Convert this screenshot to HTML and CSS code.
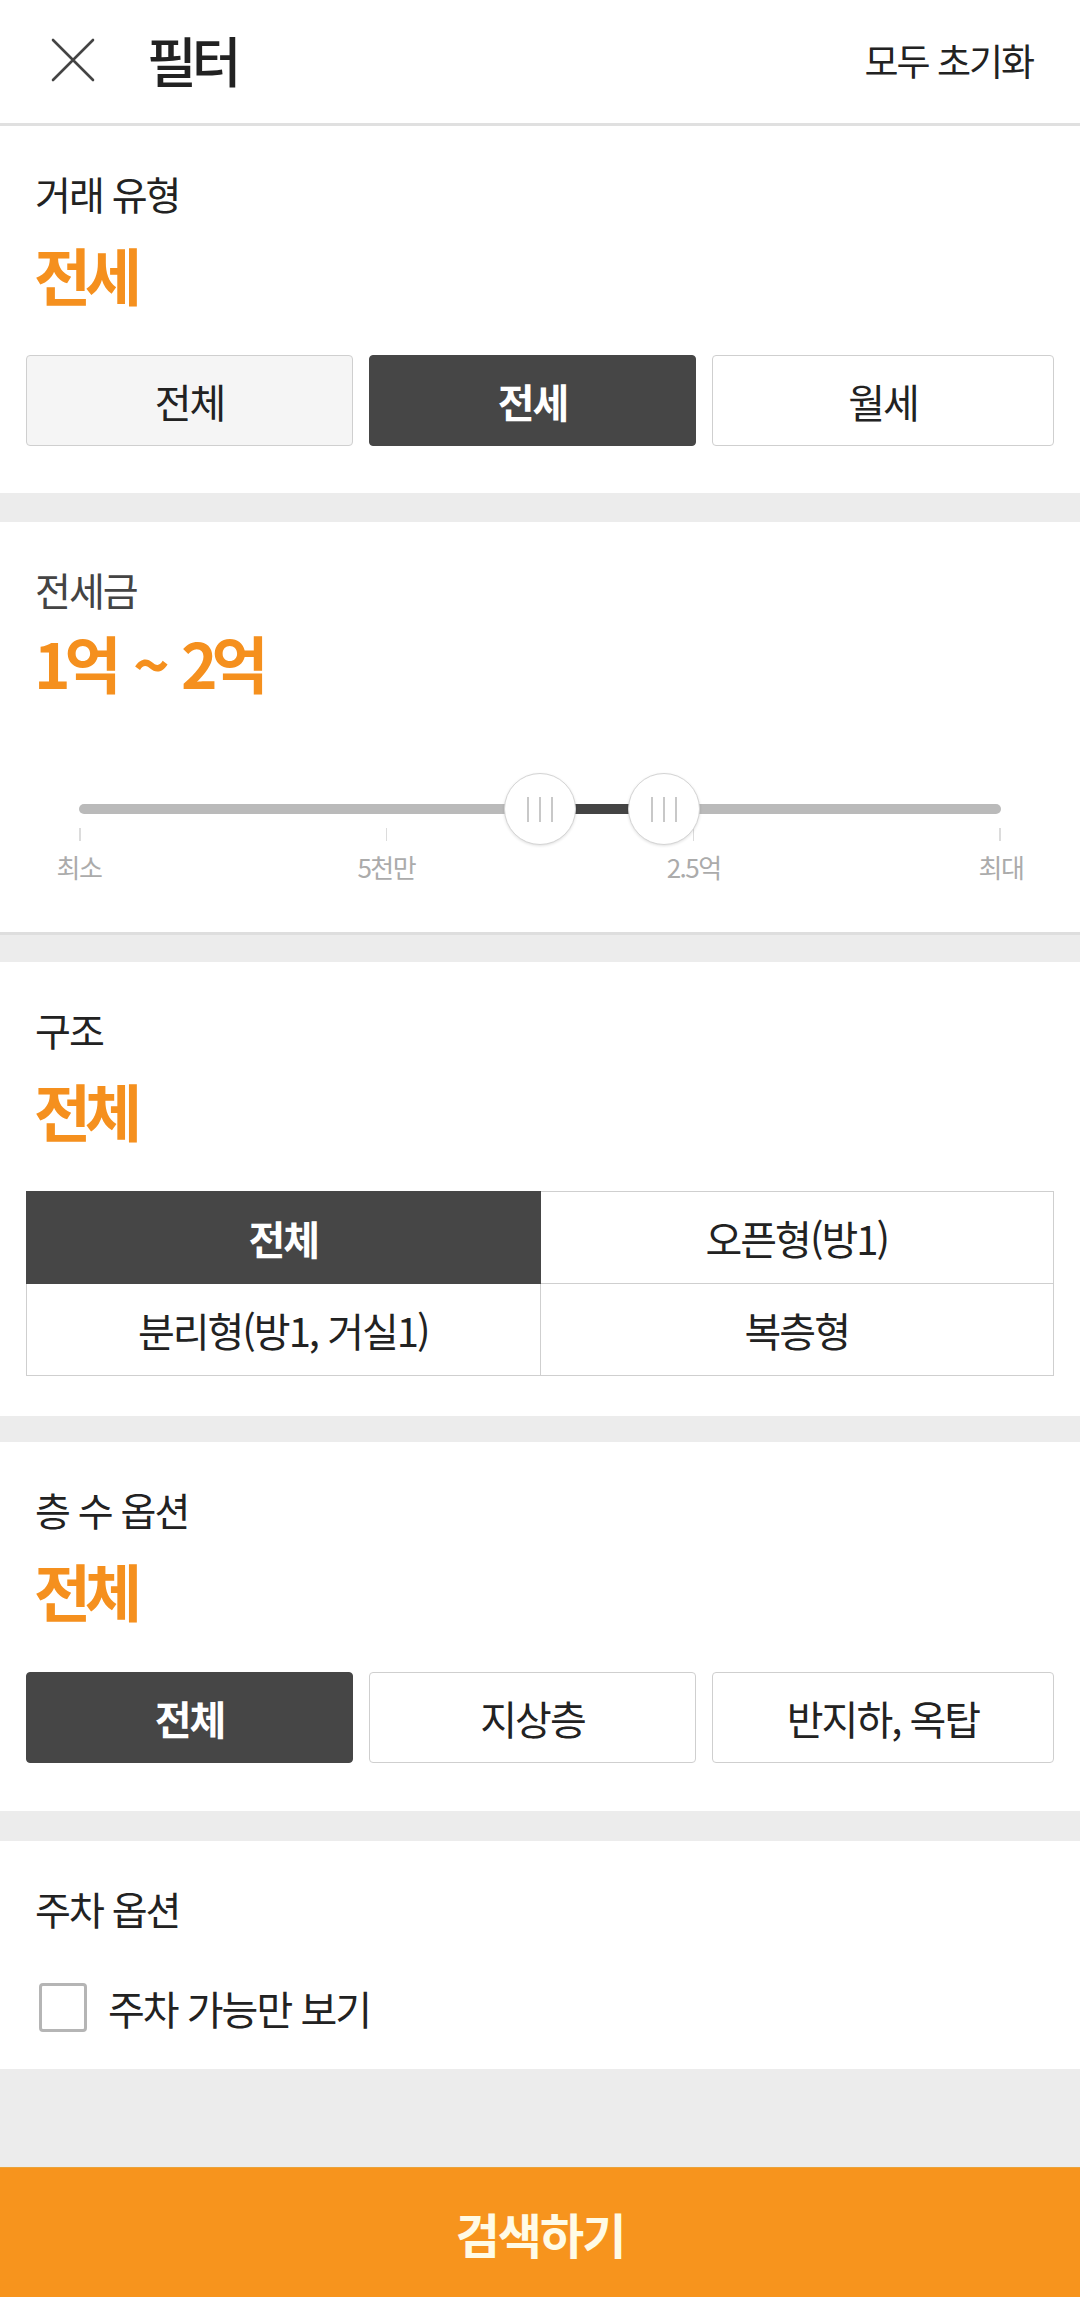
FILE: index.html
```html
<!DOCTYPE html>
<html lang="ko">
<head>
    <meta charset="UTF-8">
    <meta name="viewport" content="width=device-width, initial-scale=1.0">
    <title>필터</title>
    <link rel="stylesheet" href="styles.css">
</head>
<body>
    <!-- Header -->
    <header class="top-bar">
        <svg class="close-icon" width="44" height="44" viewBox="0 0 44 44">
            <path d="M2 2 L42 42 M42 2 L2 42" stroke="#444" stroke-width="2.6" stroke-linecap="round" fill="none"/>
        </svg>
        <h1 class="title">필터</h1>
        <span class="reset">모두 초기화</span>
    </header>

    <!-- 거래 유형 -->
    <section class="section sec-deal">
        <div class="label">거래 유형</div>
        <div class="value">전세</div>
        <div class="btn-row">
            <div class="opt opt-gray">전체</div>
            <div class="opt opt-on">전세</div>
            <div class="opt">월세</div>
        </div>
    </section>

    <!-- 전세금 -->
    <section class="section sec-price">
        <div class="label">전세금</div>
        <div class="value value-range">1억 ~ 2억</div>
        <div class="slider">
            <div class="track">
                <div class="track-fill" style="left: 50.05%; width: 13.35%;"></div>
                <div class="thumb" style="left: 50.05%;"><i></i><i></i><i></i></div>
                <div class="thumb" style="left: 63.4%;"><i></i><i></i><i></i></div>
            </div>
            <div class="ticks">
                <span></span><span></span><span></span><span></span>
            </div>
            <div class="tick-labels">
                <span>최소</span><span>5천만</span><span>2.5억</span><span>최대</span>
            </div>
        </div>
    </section>

    <!-- 구조 -->
    <section class="section sec-room">
        <div class="label">구조</div>
        <div class="value">전체</div>
        <table class="room-table">
            <tr>
                <td class="cell-on">전체</td>
                <td>오픈형(방1)</td>
            </tr>
            <tr>
                <td>분리형(방1, 거실1)</td>
                <td>복층형</td>
            </tr>
        </table>
    </section>

    <!-- 층 수 옵션 -->
    <section class="section sec-floor">
        <div class="label">층 수 옵션</div>
        <div class="value">전체</div>
        <div class="btn-row btn-row-low">
            <div class="opt opt-on">전체</div>
            <div class="opt">지상층</div>
            <div class="opt">반지하, 옥탑</div>
        </div>
    </section>

    <!-- 주차 옵션 -->
    <section class="section sec-park">
        <div class="label">주차 옵션</div>
        <label class="check-row">
            <span class="check-box"></span>
            <span class="check-text">주차 가능만 보기</span>
        </label>
    </section>

    <button class="search-btn">검색하기</button>
</body>
</html>
```

FILE: styles.css
```css
* {
    margin: 0;
    padding: 0;
    box-sizing: border-box;
}

body {
    display: flex;
    flex-direction: column;
    height: 2297px;
    overflow: hidden;
    background: #ececec;
    font-family: "Noto Sans CJK KR", "Noto Sans", sans-serif;
    color: #222;
}

/* Header */
.top-bar {
    display: flex;
    align-items: center;
    height: 126px;
    padding: 0 47px 3px 51px;
    background: #fff;
    border-bottom: 3px solid #e0e0e0;
}

.close-icon {
    flex-shrink: 0;
}

.title {
    margin-left: 52px;
    font-size: 54px;
    font-weight: 500;
    letter-spacing: -5px;
    line-height: 60px;
    color: #222;
}

.reset {
    margin-left: auto;
    font-size: 37px;
    letter-spacing: -2px;
    line-height: 44px;
    color: #222;
}

/* Sections */
.section {
    background: #fff;
    padding: 45px 26px 47px;
}

.sec-deal { margin-bottom: 29px; }
.sec-price { margin-bottom: 27px; padding-bottom: 50px; border-bottom: 3px solid #dedede; }
.sec-room { margin-bottom: 26px; padding-bottom: 40px; }
.sec-floor { margin-bottom: 30px; padding-bottom: 48px; }
.sec-park { padding-bottom: 37px; }

.label {
    padding-left: 9px;
    font-size: 39px;
    letter-spacing: -2px;
    line-height: 44px;
    color: #222;
}

.sec-price .label {
    color: #444;
}

.value {
    margin-top: 24px;
    padding-left: 8px;
    font-size: 62px;
    font-weight: 700;
    letter-spacing: -6px;
    line-height: 70px;
    color: #f5901e;
}

.value-range {
    margin-top: 16px;
    word-spacing: 6px;
}

/* Option buttons */
.btn-row {
    display: grid;
    grid-template-columns: 327px 327px 1fr;
    gap: 16px;
    margin-top: 46px;
}

.btn-row-low {
    margin-top: 47px;
}

.opt {
    display: flex;
    align-items: center;
    justify-content: center;
    height: 91px;
    border: 1.5px solid #cfcfcf;
    border-radius: 4px;
    background: #fff;
    font-size: 40px;
    letter-spacing: -2px;
    color: #222;
}

.opt-gray {
    background: #f5f5f5;
}

.opt-on {
    background: #464646;
    border-color: #464646;
    color: #fff;
    font-weight: 700;
}

/* Price slider */
.slider {
    margin: 107px 53px 0;
}

.track {
    position: relative;
    height: 10px;
    border-radius: 5px;
    background: #bababa;
}

.track-fill {
    position: absolute;
    top: 0;
    height: 100%;
    background: #444;
}

.thumb {
    position: absolute;
    top: 5px;
    width: 72px;
    height: 72px;
    transform: translate(-50%, -50%);
    display: flex;
    align-items: center;
    justify-content: center;
    gap: 10px;
    background: #fff;
    border: 1.5px solid #d4d4d4;
    border-radius: 50%;
    box-shadow: 0 1px 3px rgba(0, 0, 0, 0.12);
}

.thumb i {
    display: block;
    width: 2px;
    height: 25px;
    background: #c8c8c8;
}

.ticks {
    display: flex;
    justify-content: space-between;
    height: 13px;
    margin-top: 14px;
}

.ticks span {
    width: 1.5px;
    background: #dcdcdc;
}

.tick-labels {
    display: flex;
    justify-content: space-between;
    margin-top: 11px;
    line-height: 30px;
}

.tick-labels span {
    display: flex;
    justify-content: center;
    width: 0;
    white-space: nowrap;
    font-size: 26px;
    letter-spacing: -1.5px;
    color: #ababab;
}

/* Room table */
.room-table {
    width: 100%;
    margin-top: 46px;
    border-collapse: collapse;
    border: 1.5px solid #cfcfcf;
    table-layout: fixed;
}

.room-table td {
    height: 92px;
    border: 1.5px solid #cfcfcf;
    text-align: center;
    font-size: 40px;
    letter-spacing: -2px;
    color: #222;
}

.room-table .cell-on {
    background: #464646;
    border-color: #464646;
    color: #fff;
    font-weight: 700;
}

/* Parking checkbox */
.check-row {
    display: flex;
    align-items: center;
    margin-top: 53px;
    padding-left: 13px;
}

.check-box {
    width: 48px;
    height: 49px;
    border: 3px solid #b5b5b5;
    border-radius: 4px;
}

.check-text {
    margin-left: 21px;
    font-size: 40px;
    letter-spacing: -2px;
    line-height: 44px;
    color: #222;
}

/* Search button */
.search-btn {
    margin-top: auto;
    height: 130px;
    border: none;
    border-top: 1px solid #eaa33a;
    background: #f7941d;
    font-family: inherit;
    font-size: 48px;
    font-weight: 700;
    letter-spacing: -2px;
    color: #fffbe6;
}
```
